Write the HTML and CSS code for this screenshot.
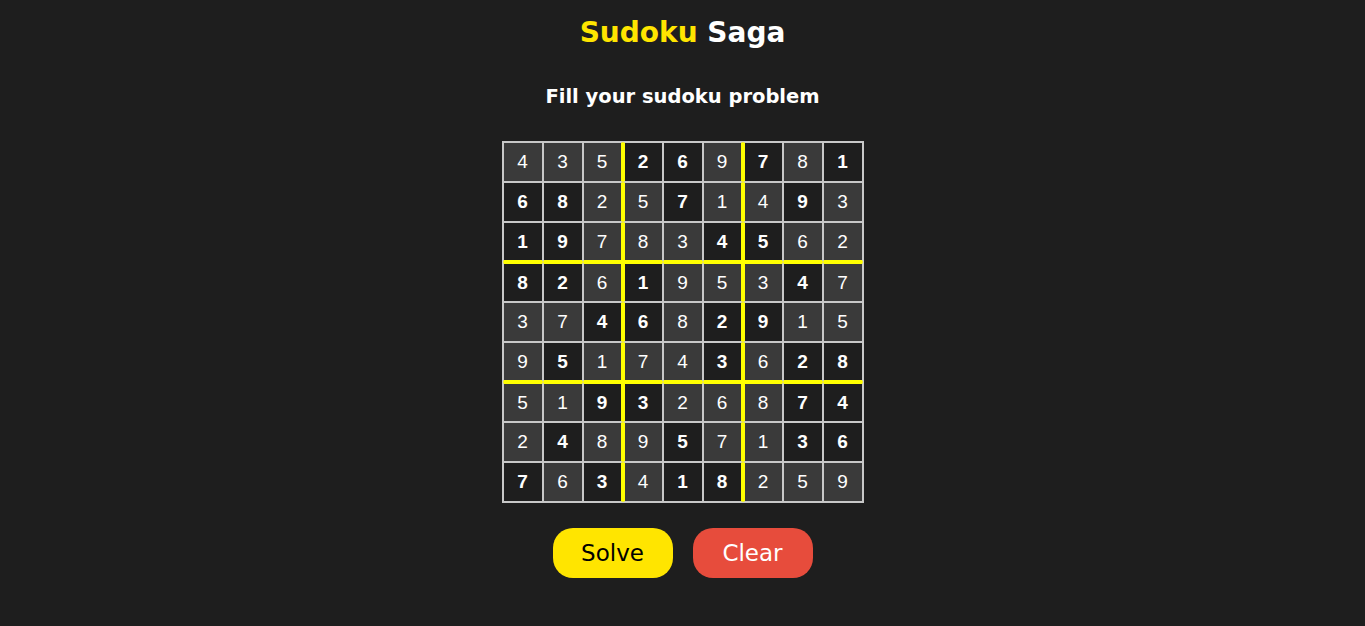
FILE: index.html
```html
<!DOCTYPE html>
<html>
<head>
<meta charset="utf-8">
<link rel="stylesheet" href="styles.css">
</head>
<body>
<main class="app">
  <h1 class="title"><span class="accent">Sudoku</span> Saga</h1>
  <h2 class="subtitle">Fill your sudoku problem</h2>
  <div class="board" id="board"></div>
  <div class="actions">
    <button class="btn solve">Solve</button>
    <button class="btn clear">Clear</button>
  </div>
</main>
<script src="app.js"></script>
</body>
</html>
```

FILE: app.js
```js
const values = [
  "435269781","682571493","197834562",
  "826195347","374682915","951743628",
  "519326874","248957136","763418259"
];
const given = [
  "000110101","110010010","110001100",
  "110100010","001101100","010001011",
  "001100011","010010011","101011000"
];
const board = document.getElementById('board');
for (let r = 0; r < 9; r++) {
  for (let c = 0; c < 9; c++) {
    const d = document.createElement('div');
    let cls = 'cell';
    cls += given[r][c] === '1' ? ' given' : ' solved';
    if (c === 2 || c === 5) cls += ' br';
    if (c === 3 || c === 6) cls += ' bl';
    if (r === 2 || r === 5) cls += ' bb';
    if (r === 3 || r === 6) cls += ' bt';
    d.className = cls;
    d.textContent = values[r][c];
    board.appendChild(d);
  }
}
```

FILE: styles.css
```css
html, body {
  margin: 0;
  padding: 0;
  background: #1e1e1e;
}
.app {
  display: flex;
  flex-direction: column;
  align-items: center;
  font-family: "DejaVu Sans", sans-serif;
}
.title {
  margin: 15px 0 0;
  font-size: 28px;
  font-weight: 700;
  color: #ffffff;
  line-height: 36px;
}
.accent {
  color: #ffe500;
}
.subtitle {
  margin: 31px 0 0;
  font-size: 19.5px;
  font-weight: 600;
  color: #ffffff;
  line-height: 30px;
}
.board {
  margin-top: 29px;
  display: grid;
  grid-template-columns: repeat(9, 40px);
  grid-template-rows: repeat(9, 40px);
  border: 1px solid #c8c8c8;
}
.cell {
  box-sizing: border-box;
  border: 1px solid #c8c8c8;
  display: flex;
  align-items: center;
  justify-content: center;
  font-family: "Liberation Sans", Arial, sans-serif;
  font-size: 19px;
  color: #ffffff;
}
.cell.given {
  background: #1e1e1e;
  font-weight: 700;
}
.cell.solved {
  background: #3a3a3a;
  font-weight: 400;
}
.cell.br { border-right: 2px solid #ffff00; }
.cell.bl { border-left: 2px solid #ffff00; }
.cell.bb { border-bottom: 2px solid #ffff00; }
.cell.bt { border-top: 2px solid #ffff00; }
.actions {
  margin-top: 25px;
  display: flex;
  gap: 20px;
}
.btn {
  width: 120px;
  height: 50px;
  border: none;
  border-radius: 20px;
  font-family: "DejaVu Sans", sans-serif;
  font-size: 23px;
  font-weight: 500;
  cursor: pointer;
}
.solve {
  background: #ffe500;
  color: #000000;
}
.clear {
  background: #e74c3c;
  color: #ffffff;
}
```
